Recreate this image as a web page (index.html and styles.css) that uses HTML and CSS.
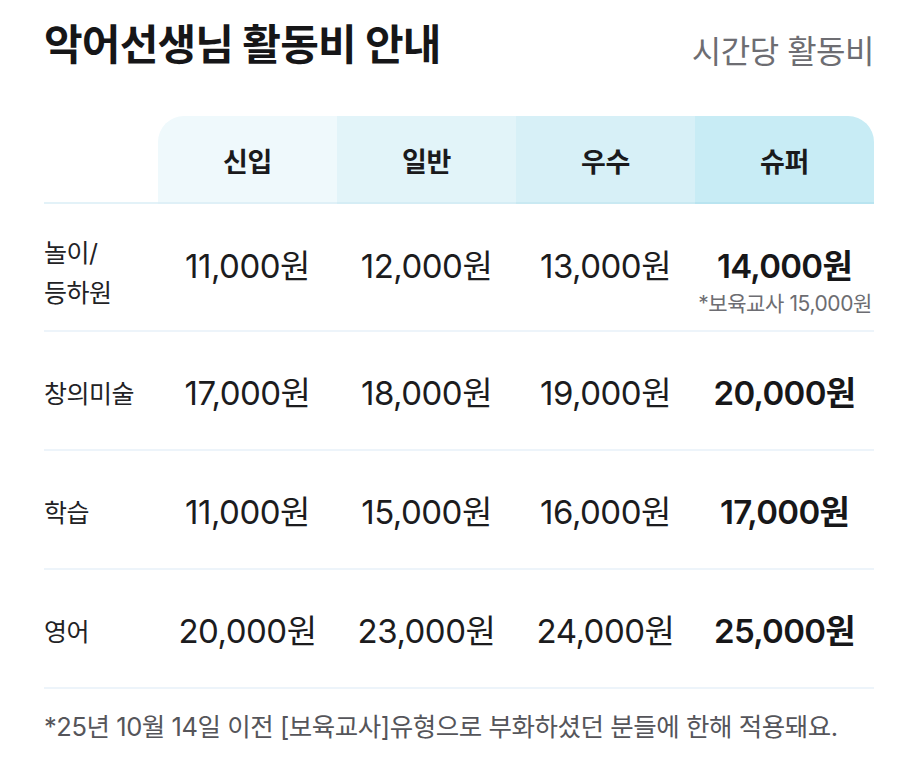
FILE: index.html
```html
<!DOCTYPE html>
<html lang="ko">
<head>
<meta charset="utf-8">
<link rel="stylesheet" href="styles.css">
</head>
<body>
<div class="page">
  <div class="top">
    <h1 class="title">악어선생님 활동비 안내</h1>
    <div class="unit">시간당 활동비</div>
  </div>
  <div class="table">
    <div class="hcell blank"></div>
    <div class="hcell h1">신입</div>
    <div class="hcell h2">일반</div>
    <div class="hcell h3">우수</div>
    <div class="hcell h4">슈퍼</div>

    <div class="cell label tall">놀이/<br>등하원</div>
    <div class="cell val tall">11,000원</div>
    <div class="cell val tall">12,000원</div>
    <div class="cell val tall">13,000원</div>
    <div class="cell val tall super withnote"><span class="amt">14,000원</span><span class="note">*보육교사 15,000원</span></div>

    <div class="cell label">창의미술</div>
    <div class="cell val">17,000원</div>
    <div class="cell val">18,000원</div>
    <div class="cell val">19,000원</div>
    <div class="cell val super">20,000원</div>

    <div class="cell label">학습</div>
    <div class="cell val">11,000원</div>
    <div class="cell val">15,000원</div>
    <div class="cell val">16,000원</div>
    <div class="cell val super">17,000원</div>

    <div class="cell label">영어</div>
    <div class="cell val">20,000원</div>
    <div class="cell val">23,000원</div>
    <div class="cell val">24,000원</div>
    <div class="cell val super">25,000원</div>
  </div>
  <p class="foot">*25년 10월 14일 이전 [보육교사]유형으로 부화하셨던 분들에 한해 적용돼요.</p>
</div>
</body>
</html>
```

FILE: styles.css
```css
* { box-sizing: border-box; }
html, body { margin: 0; padding: 0; background: #fff; }
body {
  font-family: Inter, "Noto Sans CJK KR", sans-serif;
  color: #1b1b1d;
}
.page {
  width: 916px;
  padding: 16px 42px 0 44px;
}
.top {
  display: flex;
  justify-content: space-between;
  align-items: flex-start;
  height: 100px;
}
.title {
  margin: 0;
  font-size: 42px;
  font-weight: 700;
  letter-spacing: -0.8px;
  line-height: 58px;
  color: #161618;
}
.unit {
  margin-top: 14px;
  font-size: 32px;
  line-height: 44px;
  color: #6d6d72;
  letter-spacing: -0.5px;
}
.table {
  display: grid;
  grid-template-columns: 114px repeat(4, 1fr);
  grid-template-rows: 88px 128px 119px 119px 119px;
}
.hcell {
  display: flex;
  align-items: center;
  justify-content: center;
  font-size: 27px;
  font-weight: 700;
  letter-spacing: -0.3px;
  color: #1a1a1c;
  border-bottom: 2px solid #e3f2f8;
  padding-top: 2px;
}
.h1 { background: #eff9fc; border-bottom-color: #dff0f7; border-top-left-radius: 26px; }
.h2 { background: #e2f4f9; border-bottom-color: #d5edf5; }
.h3 { background: #d7f0f7; border-bottom-color: #c9e9f2; }
.h4 { background: #c8ecf5; border-bottom-color: #b9e4f0; border-top-right-radius: 26px; }
.cell {
  display: flex;
  align-items: center;
  border-bottom: 2px solid #edf4fa;
}
.label {
  font-size: 25px;
  line-height: 40px;
  letter-spacing: -0.5px;
  color: #222225;
  padding-top: 6px;
}
.label.tall { padding-top: 12px; }
.val {
  justify-content: center;
  font-size: 33px;
  letter-spacing: -0.5px;
  color: #1c1c1e;
}
.val.tall { padding-bottom: 6px; }
.super { font-weight: 600; color: #171719; letter-spacing: -0.7px; }
.withnote {
  flex-direction: column;
  justify-content: center;
  padding-top: 36px;
  padding-bottom: 0;
}
.withnote .amt { line-height: 38px; }
.withnote .note {
  align-self: flex-end;
  margin-top: 6px;
  margin-right: 2px;
  font-size: 21px;
  font-weight: 400;
  line-height: 26px;
  letter-spacing: -0.4px;
  color: #6d6d72;
}
.foot {
  margin: 20px 0 0;
  font-size: 25.5px;
  line-height: 36px;
  letter-spacing: -0.45px;
  color: #55555a;
}
```
